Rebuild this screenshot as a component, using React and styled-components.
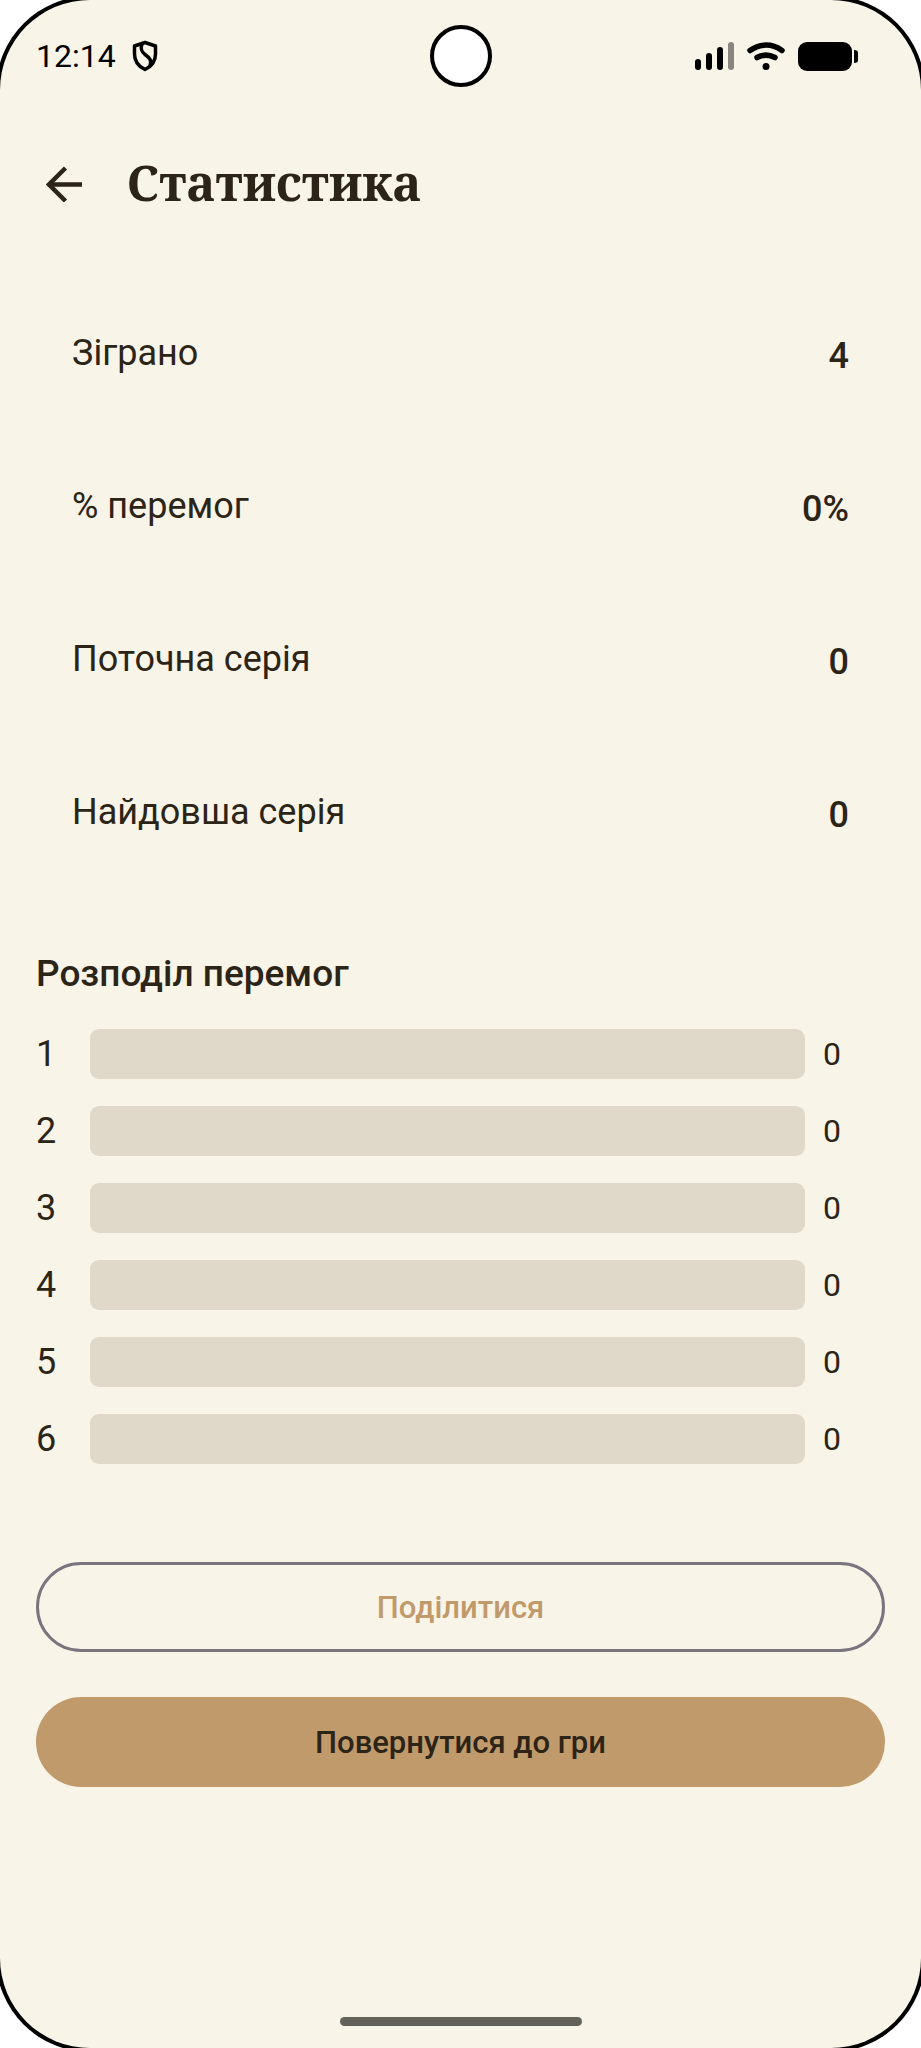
import React from 'react';
import styled, { createGlobalStyle } from 'styled-components';

const color = {
	paper: '#f8f4e8',
	ink: '#2c2416',
	track: '#e0d9c9',
	tan: '#c19a6b',
	outline: '#79747e',
	handle: '#63635b',
};

const stats = [
	{ label: 'Зіграно', value: '4' },
	{ label: '% перемог', value: '0%' },
	{ label: 'Поточна серія', value: '0' },
	{ label: 'Найдовша серія', value: '0' },
];

const distribution = [0, 0, 0, 0, 0, 0];

const ShieldIcon = () => (
	<svg width='26' height='32' viewBox='0 0 26 32' fill='none' stroke='#000' strokeWidth='3.5' strokeLinejoin='round'>
		<path d='M13 2.5 L23.5 6 V14 C23.5 21 19.5 26.5 13 29.5 C6.5 26.5 2.5 21 2.5 14 V6 Z' />
		<path d='M10 4 C8 9 9.5 11.500 13 14.5 C18 18 20 20.5 18 26' />
	</svg>
);

const SignalIcon = () => (
	<svg width='39' height='28' viewBox='0 0 39 28'>
		<rect x='0' y='17' width='6' height='11' rx='3' />
		<rect x='11' y='11' width='6' height='17' rx='3' />
		<rect x='22' y='5' width='6' height='23' rx='3' />
		<rect x='33' y='0' width='6' height='28' rx='3' opacity='0.45' />
	</svg>
);

const WifiIcon = () => (
	<svg width='38' height='28' viewBox='0 0 38 28' fill='none' stroke='#000' strokeWidth='5.5' strokeLinecap='round'>
		<path d='M3 8.5 C13 1.3 25 1.3 35 8.5' />
		<path d='M10 15.5 C15.5 12.6 22.5 12.6 28 15.5' />
		<circle cx='19' cy='24.5' r='3.5' fill='#000' stroke='none' />
	</svg>
);

const BatteryIcon = () => (
	<svg width='60' height='29' viewBox='0 0 60 29'>
		<rect x='0' y='0' width='54' height='29' rx='9' />
		<path d='M56 8 C59 8 60 9 60 11 V18 C60 20 59 21 56 21 Z' />
	</svg>
);

const ArrowIcon = () => (
	<svg width='36' height='36' viewBox='0 0 36 36' fill='none' stroke={color.ink} strokeWidth='4.5'>
		<path d='M36 18.5 H3' />
		<path d='M19.5 2 L3 18.5 L19.5 35' />
	</svg>
);

const App = () => {
	return (
		<>
			<GlobalStyle />
			<Screen>
				<StatusBar>
					<StatusGroup $gap={16}>
						<Clock>12:14</Clock>
						<ShieldIcon />
					</StatusGroup>
					<Camera />
					<StatusGroup $gap={13} $end>
						<SignalIcon />
						<WifiIcon />
						<BatteryIcon />
					</StatusGroup>
				</StatusBar>
				<Header>
					<BackButton type='button' aria-label='Назад'>
						<ArrowIcon />
					</BackButton>
					<Title>Статистика</Title>
				</Header>
				<StatList>
					{stats.map((stat) => (
						<StatRow key={stat.label}>
							<dt>{stat.label}</dt>
							<dd>{stat.value}</dd>
						</StatRow>
					))}
				</StatList>
				<Subtitle>Розподіл перемог</Subtitle>
				<Chart>
					{distribution.map((count, i) => (
						<ChartRow key={i}>
							<span>{i + 1}</span>
							<Track>
								<Fill style={{ width: `${count}%` }} />
							</Track>
							<Count>{count}</Count>
						</ChartRow>
					))}
				</Chart>
				<Actions>
					<ActionButton type='button'>Поділитися</ActionButton>
					<ActionButton type='button' $filled>
						Повернутися до гри
					</ActionButton>
				</Actions>
				<HomeHandle />
			</Screen>
		</>
	);
};

const GlobalStyle = createGlobalStyle`
	* {
		box-sizing: border-box;
	}
	body {
		margin: 0;
		background-color: white;
		overflow: hidden auto;
	}
`;

const Screen = styled.main`
	display: flex;
	flex-direction: column;
	min-height: 100vh;
	border-radius: 90px;
	box-shadow: 0 0 0 4px #000;
	background-color: ${color.paper};
	color: ${color.ink};
	font-family: Roboto, sans-serif;
	font-size: 36px;
	line-height: 54px;
`;

const StatusBar = styled.div`
	display: grid;
	grid-template-columns: 1fr auto 1fr;
	align-items: center;
	height: 112px;
	padding: 0 36px;
	color: #000;
`;

const StatusGroup = styled.div`
	display: flex;
	align-items: center;
	justify-content: ${(props) => (props.$end ? 'flex-end' : 'flex-start')};
	gap: ${(props) => props.$gap}px;
	padding-right: ${(props) => (props.$end ? '27px' : '0')};
`;

const Clock = styled.span`
	font-size: 32px;
`;

const Camera = styled.div`
	width: 62px;
	height: 62px;
	border: 4px solid #000;
	border-radius: 50%;
	background-color: white;
`;

const Header = styled.header`
	display: flex;
	align-items: center;
	gap: 27px;
	height: 144px;
	padding: 0 28px;
`;

const BackButton = styled.button`
	display: flex;
	align-items: center;
	justify-content: center;
	width: 72px;
	height: 72px;
	padding: 0;
	border: none;
	background: none;
	cursor: pointer;
`;

const Title = styled.h1`
	margin: 0;
	padding-bottom: 4px;
	font-family: 'Noto Serif', 'DejaVu Serif Condensed', serif;
	font-size: 49px;
	font-weight: 700;
`;

const StatList = styled.dl`
	display: flex;
	flex-direction: column;
	gap: 18px;
	margin: 29px 36px 0;
`;

const StatRow = styled.div`
	display: flex;
	align-items: center;
	justify-content: space-between;
	height: 135px;
	padding: 0 36px;
	dd {
		margin: 0;
		padding-top: 6px;
		font-weight: 500;
	}
`;

const Subtitle = styled.h2`
	margin: 68px 36px 0;
	font-size: 37px;
	font-weight: 500;
`;

const Chart = styled.ol`
	display: flex;
	flex-direction: column;
	gap: 23px;
	margin: 26px 36px 0;
	padding: 0;
	list-style: none;
`;

const ChartRow = styled.li`
	display: grid;
	grid-template-columns: 36px 1fr 62px;
	gap: 18px;
	align-items: center;
	height: 54px;
`;

const Track = styled.div`
	height: 50px;
	border-radius: 9px;
	background-color: ${color.track};
	overflow: hidden;
`;

const Fill = styled.div`
	height: 100%;
	background-color: ${color.tan};
`;

const Count = styled.span`
	font-size: 32px;
`;

const Actions = styled.div`
	display: flex;
	flex-direction: column;
	gap: 45px;
	margin: 96px 36px 0;
`;

const ActionButton = styled.button`
	height: 90px;
	border: ${(props) => (props.$filled ? 'none' : `3px solid ${color.outline}`)};
	border-radius: 45px;
	background-color: ${(props) => (props.$filled ? color.tan : 'transparent')};
	color: ${(props) => (props.$filled ? color.ink : color.tan)};
	font-family: inherit;
	font-size: 31px;
	font-weight: 500;
	cursor: pointer;
`;

const HomeHandle = styled.div`
	align-self: center;
	width: 242px;
	height: 9px;
	margin: auto 0 22px;
	border-radius: 5px;
	background-color: ${color.handle};
`;

export default App;
